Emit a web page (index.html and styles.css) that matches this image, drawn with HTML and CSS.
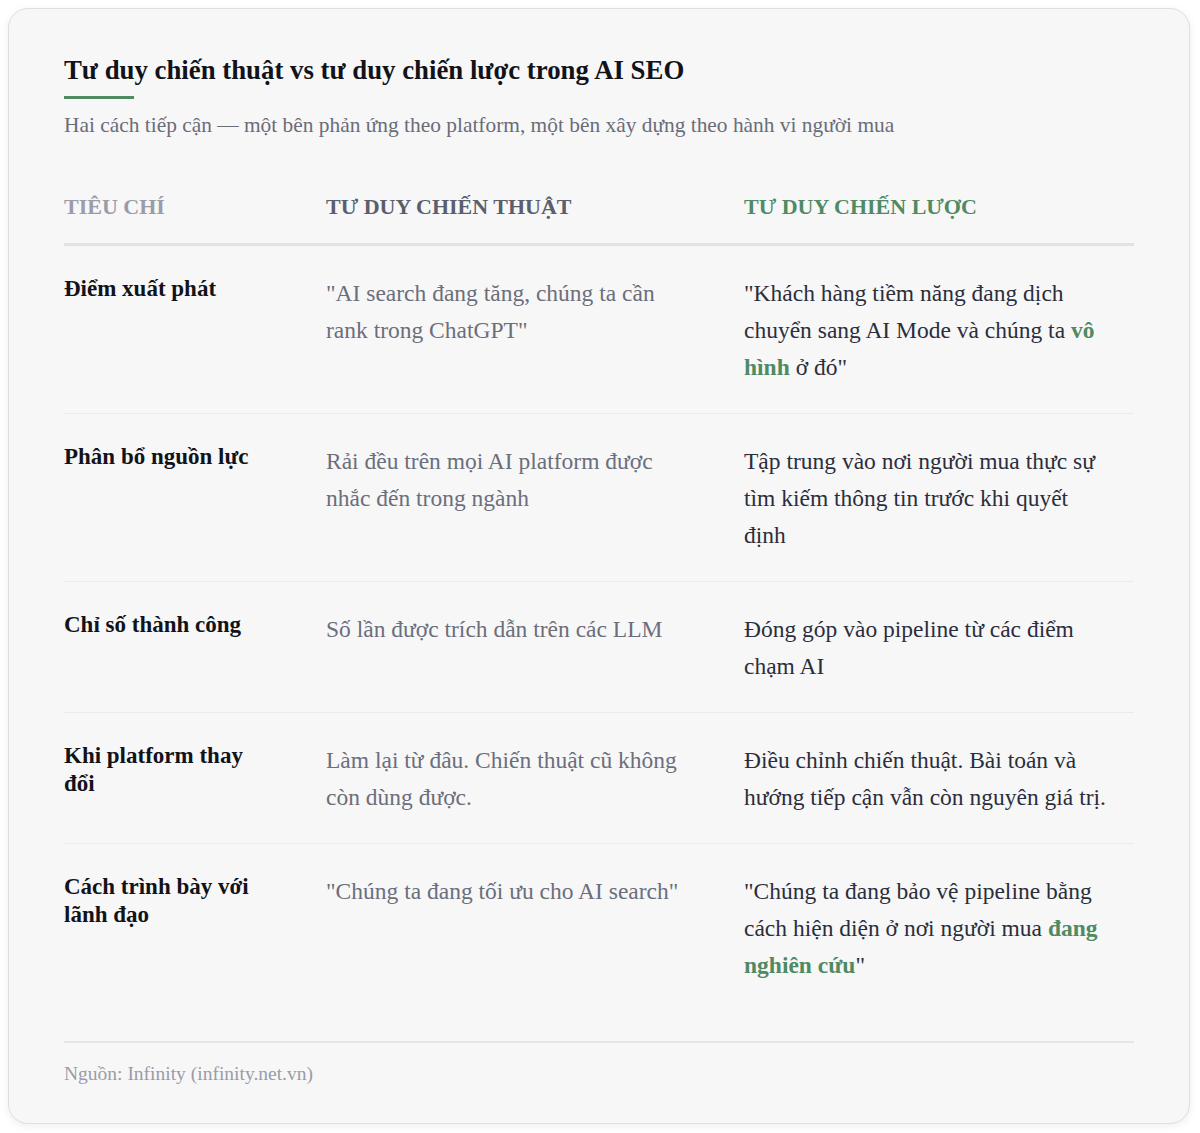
FILE: index.html
```html
<!DOCTYPE html>
<html lang="vi">
<head>
<meta charset="utf-8">
<title>Tư duy chiến thuật vs tư duy chiến lược trong AI SEO</title>
<link rel="stylesheet" href="styles.css">
</head>
<body>
<div class="card">
  <h1 class="title">Tư duy chiến thuật vs tư duy chiến lược trong AI SEO</h1>
  <div class="accent"></div>
  <p class="subtitle">Hai cách tiếp cận — một bên phản ứng theo platform, một bên xây dựng theo hành vi người mua</p>

  <div class="table">
    <div class="row head">
      <div class="cell c1 h-muted">TIÊU CHÍ</div>
      <div class="cell c2 h-dark">TƯ DUY CHIẾN THUẬT</div>
      <div class="cell c3 h-green">TƯ DUY CHIẾN LƯỢC</div>
    </div>
    <div class="row">
      <div class="cell c1 label">Điểm xuất phát</div>
      <div class="cell c2 tactic">"AI search đang tăng, chúng ta cần rank trong ChatGPT"</div>
      <div class="cell c3 strategy">"Khách hàng tiềm năng đang dịch chuyển sang AI Mode và chúng ta <strong class="hl">vô hình</strong> ở đó"</div>
    </div>
    <div class="row">
      <div class="cell c1 label">Phân bổ nguồn lực</div>
      <div class="cell c2 tactic">Rải đều trên mọi AI platform được nhắc đến trong ngành</div>
      <div class="cell c3 strategy">Tập trung vào nơi người mua thực sự tìm kiếm thông tin trước khi quyết định</div>
    </div>
    <div class="row">
      <div class="cell c1 label">Chỉ số thành công</div>
      <div class="cell c2 tactic">Số lần được trích dẫn trên các LLM</div>
      <div class="cell c3 strategy">Đóng góp vào pipeline từ các điểm chạm AI</div>
    </div>
    <div class="row">
      <div class="cell c1 label">Khi platform thay đổi</div>
      <div class="cell c2 tactic">Làm lại từ đâu. Chiến thuật cũ không còn dùng được.</div>
      <div class="cell c3 strategy">Điều chỉnh chiến thuật. Bài toán và hướng tiếp cận vẫn còn nguyên giá trị.</div>
    </div>
    <div class="row last">
      <div class="cell c1 label">Cách trình bày với lãnh đạo</div>
      <div class="cell c2 tactic">"Chúng ta đang tối ưu cho AI search"</div>
      <div class="cell c3 strategy">"Chúng ta đang bảo vệ pipeline bằng cách hiện diện ở nơi người mua <strong class="hl">đang nghiên cứu</strong>"</div>
    </div>
  </div>

  <div class="footer">Nguồn: Infinity (infinity.net.vn)</div>
</div>
</body>
</html>
```
FILE: styles.css
```css
* { box-sizing: border-box; }

html, body {
  margin: 0;
  background: #ffffff;
}

body {
  padding: 8px 10px 9px 8px;
  font-family: "Liberation Serif", "Times New Roman", serif;
  color: #111318;
}

.card {
  background: #f7f7f8;
  border: 1px solid #dedee3;
  border-radius: 20px;
  box-shadow: 0 2px 8px rgba(0, 0, 0, 0.07);
  padding: 44px 55px 36px 55px;
}

.title {
  margin: 0;
  font-size: 26.8px;
  font-weight: 700;
  line-height: 34px;
  color: #111318;
}

.accent {
  width: 70px;
  height: 3px;
  background: #4f8a63;
  margin-top: 9px;
}

.subtitle {
  margin: 12px 0 0 0;
  font-size: 21.4px;
  line-height: 28px;
  color: #6a6c78;
}

.table {
  margin-top: 54px;
}

.row {
  display: grid;
  grid-template-columns: 262px 418px 390px;
  border-bottom: 1px solid #ebebee;
  padding: 29px 0 27px 0;
}

.row.head {
  border-bottom: 3px solid #e1e1e6;
  padding: 0 0 22px 0;
}

.row.last {
  border-bottom: none;
}

.cell.c1 { padding-right: 56px; }
.cell.c2 { padding-right: 54px; }
.cell.c3 { padding-right: 24px; }

.head .cell {
  font-size: 22px;
  font-weight: 700;
  line-height: 28px;
}

.h-muted { color: #9a9ca9; }
.h-dark { color: #5b5e6b; }
.h-green { color: #4f8a63; }

.label {
  font-size: 23px;
  font-weight: 700;
  line-height: 28px;
  color: #111318;
}

.tactic {
  font-size: 23.5px;
  line-height: 37px;
  color: #6b6e7b;
}

.strategy {
  font-size: 23.5px;
  line-height: 37px;
  color: #2b2e3b;
}

.hl {
  color: #4f8a63;
  font-weight: 700;
}

.footer {
  margin-top: 30px;
  border-top: 2px solid #e4e4e9;
  padding-top: 18px;
  font-size: 19.5px;
  line-height: 26px;
  color: #9a9ca9;
}
```
